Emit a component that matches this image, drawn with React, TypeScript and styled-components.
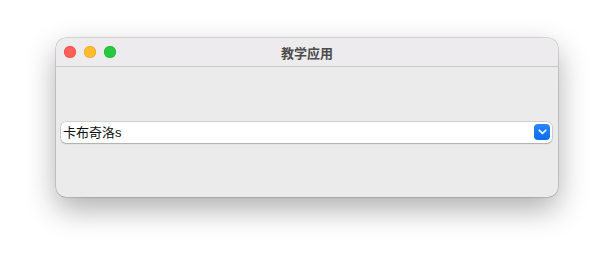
import styled, { createGlobalStyle } from "styled-components";

const Global = createGlobalStyle`
    html, body {
        margin: 0;
        padding: 0;
        background: #ffffff;
    }
    body {
        font-family: "Liberation Sans", "Noto Sans CJK SC", sans-serif;
    }
`;

const Desk = styled.div`
    width: 614px;
    height: 271px;
    padding: 38px 0 0 56px;
    box-sizing: border-box;
`;

const Janela = styled.div`
    width: 502px;
    height: 159px;
    border-radius: 10px;
    overflow: hidden;
    background: #ebebeb;
    display: flex;
    flex-direction: column;
    box-shadow: 0 0 0 0.5px rgba(0, 0, 0, 0.25), 0 12px 30px rgba(0, 0, 0, 0.32);
`;

const BarraTitulo = styled.div`
    height: 28px;
    flex: none;
    display: flex;
    align-items: center;
    position: relative;
    background: #edebee;
    border-bottom: 1px solid #c9c8ca;
    padding-left: 8px;
    gap: 8px;
`;

const Luz = styled.span<{ $cor: string; $borda: string }>`
    width: 12px;
    height: 12px;
    border-radius: 50%;
    background: ${p => p.$cor};
    box-shadow: inset 0 0 0 0.5px ${p => p.$borda};
`;

const Titulo = styled.div`
    position: absolute;
    left: 0;
    right: 0;
    text-align: center;
    font-family: "Noto Sans CJK SC", sans-serif;
    font-size: 13px;
    font-weight: 700;
    color: #4c4c4c;
    pointer-events: none;
`;

const Conteudo = styled.div`
    flex: 1;
    display: flex;
    align-items: center;
    padding: 0 6px 0 5px;
`;

const Popup = styled.div`
    flex: 1;
    height: 21px;
    display: flex;
    align-items: center;
    background: #ffffff;
    border-radius: 5px;
    box-shadow: 0 0 0 0.5px rgba(0, 0, 0, 0.22), 0 1px 1.5px rgba(0, 0, 0, 0.18);
    padding: 0 2px 0 2px;
`;

const Valor = styled.span`
    flex: 1;
    font-family: "Liberation Sans", "Noto Sans CJK SC", sans-serif;
    font-size: 13px;
    color: #111111;
    line-height: 21px;
`;

const BotaoAzul = styled.span`
    width: 16px;
    height: 16px;
    border-radius: 4px;
    background: linear-gradient(#2b86f8, #0a6cf0);
    display: flex;
    align-items: center;
    justify-content: center;
`;

export default function App() {
    return (
        <>
            <Global />
            <Desk>
                <Janela>
                    <BarraTitulo>
                        <Luz $cor="#ff5f57" $borda="#e2463f" />
                        <Luz $cor="#febc2e" $borda="#e1a116" />
                        <Luz $cor="#28c840" $borda="#14ae2a" />
                        <Titulo>教学应用</Titulo>
                    </BarraTitulo>
                    <Conteudo>
                        <Popup>
                            <Valor>卡布奇洛s</Valor>
                            <BotaoAzul>
                                <svg width="9" height="6" viewBox="0 0 9 6">
                                    <path d="M1.2 1.2 L4.5 4.4 L7.8 1.2" fill="none" stroke="#fff" strokeWidth="1.6" strokeLinecap="round" strokeLinejoin="round" />
                                </svg>
                            </BotaoAzul>
                        </Popup>
                    </Conteudo>
                </Janela>
            </Desk>
        </>
    );
}
